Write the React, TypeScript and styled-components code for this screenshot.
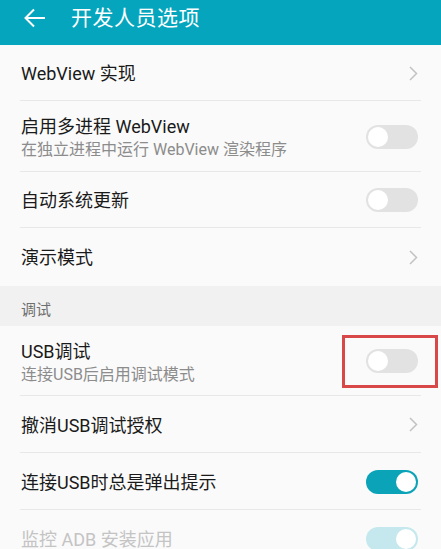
import React from 'react';
import styled, { createGlobalStyle } from 'styled-components';

const GlobalStyle = createGlobalStyle`
  html, body {
    margin: 0;
    padding: 0;
    background: #fafafa;
    font-family: Roboto, "Noto Sans CJK SC", sans-serif;
  }
`;

const Screen = styled.div`
  width: 441px;
  height: 549px;
  overflow: hidden;
  background: #fafafa;
`;

const Header = styled.header`
  height: 45px;
  background: #05a6bd;
  display: flex;
  align-items: flex-start;
  padding: 5px 0 0 24px;
  box-sizing: border-box;
  gap: 25px;
  color: #fff;
`;

const Title = styled.h1`
  margin: 0;
  font-size: 21px;
  font-weight: 400;
  line-height: 26px;
  letter-spacing: 0.5px;
`;

const BackIcon = styled.svg`
  margin-top: 3px;
  flex: none;
`;

const Row = styled.div<{ $h?: number; $last?: boolean }>`
  position: relative;
  height: ${(p) => p.$h ?? 57}px;
  display: flex;
  align-items: center;
  padding: 0 23px 0 21px;
  box-sizing: border-box;
  &::after {
    content: '';
    display: ${(p) => (p.$last ? 'none' : 'block')};
    position: absolute;
    left: 20px;
    right: 20px;
    bottom: 0;
    height: 1px;
    background: #e8e8e8;
  }
`;

const Texts = styled.div`
  flex: 1;
  display: flex;
  flex-direction: column;
  gap: 1px;
  padding-top: 2px;
`;

const Label = styled.div<{ $disabled?: boolean }>`
  font-size: 18px;
  line-height: 24px;
  color: ${(p) => (p.$disabled ? '#c4c4c4' : '#1a1a1a')};
`;

const Sub = styled.div`
  font-size: 16px;
  line-height: 20px;
  color: #8c8c8c;
`;

const Section = styled.div`
  height: 40px;
  background: #f1f1f1;
  display: flex;
  align-items: center;
  padding: 5px 0 0 21px;
  box-sizing: border-box;
  font-size: 15px;
  color: #6e6e6e;
`;

const Track = styled.div<{ $on?: boolean; $disabled?: boolean }>`
  width: 52px;
  height: 24px;
  border-radius: 12px;
  background: ${(p) => (p.$on ? (p.$disabled ? '#c4e8ed' : '#0ba3b8') : '#e2e2e2')};
  display: flex;
  align-items: center;
  justify-content: ${(p) => (p.$on ? 'flex-end' : 'flex-start')};
  padding: 0 2px;
  box-sizing: border-box;
  flex: none;
`;

const Knob = styled.div`
  width: 20px;
  height: 20px;
  border-radius: 50%;
  background: #fff;
`;

const Highlight = styled.div`
  position: absolute;
  left: 342px;
  top: 9px;
  width: 96px;
  height: 53px;
  border: 3px solid #d94848;
  box-sizing: border-box;
`;

const Chevron = () => (
  <svg width="9" height="15" viewBox="0 0 9 15">
    <path d="M1 1 L7.5 7.5 L1 14" fill="none" stroke="#c2c2c2" strokeWidth="1.5" />
  </svg>
);

const Toggle = ({ on, disabled }: { on?: boolean; disabled?: boolean }) => (
  <Track $on={on} $disabled={disabled}>
    <Knob />
  </Track>
);

export default function App() {
  return (
    <Screen>
      <GlobalStyle />
      <Header>
        <BackIcon width="22" height="20" viewBox="0 0 22 20">
          <path d="M21 10 H2 M10 1.5 L1.5 10 L10 18.5" fill="none" stroke="#fff" strokeWidth="2" />
        </BackIcon>
        <Title>开发人员选项</Title>
      </Header>
      <Row $h={56}>
        <Texts>
          <Label>WebView 实现</Label>
        </Texts>
        <Chevron />
      </Row>
      <Row $h={71}>
        <Texts>
          <Label>启用多进程 WebView</Label>
          <Sub>在独立进程中运行 WebView 渲染程序</Sub>
        </Texts>
        <Toggle />
      </Row>
      <Row $h={56}>
        <Texts>
          <Label>自动系统更新</Label>
        </Texts>
        <Toggle />
      </Row>
      <Row $h={58} $last>
        <Texts>
          <Label>演示模式</Label>
        </Texts>
        <Chevron />
      </Row>
      <Section>调试</Section>
      <Row $h={70}>
        <Texts>
          <Label>USB调试</Label>
          <Sub>连接USB后启用调试模式</Sub>
        </Texts>
        <Toggle />
        <Highlight />
      </Row>
      <Row>
        <Texts>
          <Label>撤消USB调试授权</Label>
        </Texts>
        <Chevron />
      </Row>
      <Row>
        <Texts>
          <Label>连接USB时总是弹出提示</Label>
        </Texts>
        <Toggle on />
      </Row>
      <Row $last>
        <Texts>
          <Label $disabled>监控 ADB 安装应用</Label>
        </Texts>
        <Toggle on disabled />
      </Row>
    </Screen>
  );
}
